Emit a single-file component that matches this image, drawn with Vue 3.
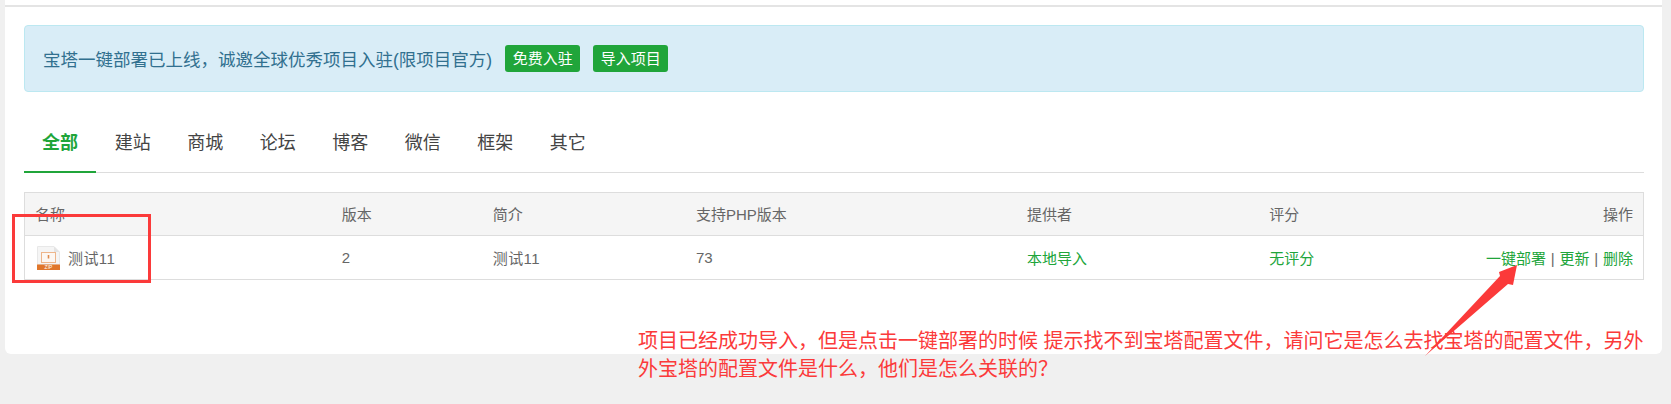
<template>
  <div class="page">
    <div class="card">
      <div class="top-line"></div>
      <div class="alert">
        <span class="alert-text">宝塔一键部署已上线，诚邀全球优秀项目入驻(限项目官方)</span>
        <a class="btn">免费入驻</a>
        <a class="btn">导入项目</a>
      </div>

      <div class="tabs">
        <div
          v-for="(tab, i) in tabs"
          :key="tab"
          class="tab"
          :class="{ active: i === 0 }"
        >
          {{ tab }}
        </div>
      </div>

      <table class="list">
        <colgroup>
          <col v-for="w in colWidths" :key="w" :style="{ width: w + 'px' }" />
        </colgroup>
        <thead>
          <tr>
            <th>名称</th>
            <th>版本</th>
            <th>简介</th>
            <th>支持PHP版本</th>
            <th>提供者</th>
            <th>评分</th>
            <th class="right">操作</th>
          </tr>
        </thead>
        <tbody>
          <tr>
            <td>
              <div class="name">
                <svg class="zip" viewBox="0 0 23 24" width="23" height="24">
                  <path d="M0.5 0.5H17L22.5 6V18.5H0.5Z" fill="#f5f5f5" stroke="#e8e8e8" />
                  <path d="M17 0.5V6H22.5Z" fill="#e4e4e4" />
                  <rect x="4.5" y="6.5" width="14" height="10" fill="#fdf7f2" stroke="#eeb58a" />
                  <rect x="10.7" y="9" width="1.6" height="3.5" fill="#df8a4c" />
                  <rect x="0" y="18.5" width="23" height="5.5" fill="#e0762b" />
                  <text x="11.5" y="23.3" class="zip-label">ZIP</text>
                </svg>
                <span class="num-text">测试11</span>
              </div>
            </td>
            <td>2</td>
            <td><span class="num-text">测试11</span></td>
            <td>73</td>
            <td class="green">本地导入</td>
            <td class="green">无评分</td>
            <td class="right actions">
              <a class="green">一键部署</a> | <a class="green">更新</a> | <a class="green">删除</a>
            </td>
          </tr>
        </tbody>
      </table>
    </div>

    <!-- 截图上的红色标注 -->
    <div class="mark-box"></div>
    <svg class="mark-arrow" viewBox="0 0 1671 404" width="1671" height="404">
      <polygon points="1517,265 1499,272 1500,276 1425,356 1508,284 1513,285" fill="#fb3a3a" />
    </svg>
    <div class="mark-text">
      <div>项目已经成功导入，但是点击一键部署的时候 提示找不到宝塔配置文件，请问它是怎么去找宝塔的配置文件，另外</div>
      <div>外宝塔的配置文件是什么，他们是怎么关联的？</div>
    </div>
  </div>
</template>

<script setup>
const tabs = ['全部', '建站', '商城', '论坛', '博客', '微信', '框架', '其它'];
const colWidths = [307, 151, 203, 331, 242, 200, 184];
</script>

<style>
html,
body {
  margin: 0;
  background: #f0f0f0;
}
</style>

<style scoped>
.page {
  position: relative;
  width: 1671px;
  height: 404px;
  overflow: hidden;
  font-family: "Liberation Sans", "Noto Sans CJK SC", sans-serif;
  font-size: 15px;
  color: #666;
}

.card {
  box-sizing: border-box;
  width: 1657px;
  height: 354px;
  margin-left: 5px;
  padding: 0 18px 0 19px;
  background: #fff;
  border-radius: 0 0 6px 6px;
}

.top-line {
  height: 2px;
  margin: 0 -18px 0 -19px;
  position: relative;
  top: 5px;
  background: #e4e4e4;
}

.alert {
  display: flex;
  align-items: center;
  box-sizing: border-box;
  height: 67px;
  margin-top: 23px;
  padding: 0 18px;
  background: #d9edf7;
  border: 1px solid #bce8f1;
  border-radius: 4px;
  color: #31708f;
  font-size: 17.5px;
}

.alert-text {
  margin-right: 13px;
}

.btn {
  box-sizing: border-box;
  width: 75px;
  height: 27px;
  margin-right: 13px;
  line-height: 27px;
  text-align: center;
  font-size: 15px;
  color: #fff;
  background: #20a53a;
  border-radius: 3px;
}

.tabs {
  display: flex;
  height: 81px;
  border-bottom: 1px solid #ddd;
  box-sizing: border-box;
}

.tab {
  box-sizing: border-box;
  width: 72.5px;
  height: 81px;
  padding-top: 39px;
  line-height: 24px;
  text-align: center;
  font-size: 18px;
  color: #444;
}

.tab.active {
  width: 72px;
  margin-right: 0.5px;
  color: #20a53a;
  font-weight: 700;
  border-bottom: 2px solid #20a53a;
}

.list {
  width: 1620px;
  margin-top: 19px;
  table-layout: fixed;
  border-collapse: collapse;
  border: 1px solid #ddd;
}

.list th,
.list td {
  padding: 0 10px;
  text-align: left;
  font-weight: 400;
  color: #666;
  white-space: nowrap;
}

.list th {
  height: 41px;
  padding-bottom: 1px;
  background: #f5f5f5;
  border-bottom: 1px solid #ddd;
}

.list td {
  height: 43px;
}

.list .right {
  text-align: right;
}

.list .green,
.green {
  color: #20a53a;
}

.actions {
  word-spacing: 0.6px;
}

.num-text {
  letter-spacing: 0.4px;
}

.name {
  display: flex;
  align-items: center;
  gap: 8px;
  padding-left: 2px;
}

.zip {
  display: block;
}

.zip-label {
  font-size: 5px;
  fill: #fff;
  text-anchor: middle;
}

.mark-box {
  position: absolute;
  left: 12px;
  top: 214px;
  box-sizing: border-box;
  width: 139px;
  height: 69px;
  border: 3px solid #fb3a3a;
}

.mark-arrow {
  position: absolute;
  left: 0;
  top: 0;
}

.mark-text {
  position: absolute;
  left: 638px;
  top: 327px;
  font-size: 20px;
  line-height: 28px;
  color: #fb3a3a;
  white-space: nowrap;
}
</style>
